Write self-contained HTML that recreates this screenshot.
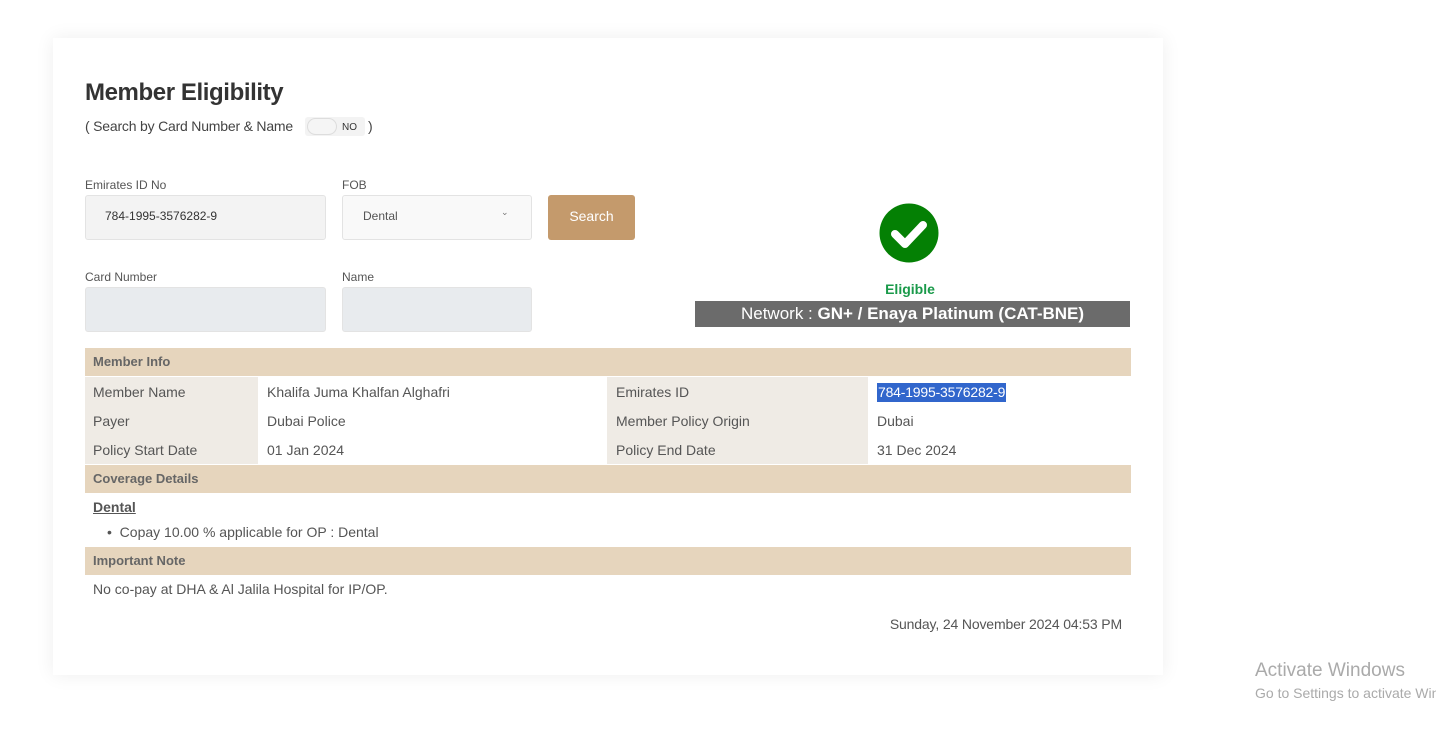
<!DOCTYPE html>
<html><head><meta charset="utf-8"><style>
body{margin:0;width:1436px;height:751px;background:#fff;font-family:"Liberation Sans",sans-serif;position:relative;overflow:hidden;color:#555}
.a{position:absolute;white-space:nowrap}
.card{position:absolute;left:53px;top:38px;width:1110px;height:637px;background:#fff;box-shadow:0 0 18px rgba(0,0,0,.07)}
.lbl{font-size:12px;color:#555}
.inp{position:absolute;border:1px solid #e3e3e3;border-radius:3px;box-sizing:border-box}
.hdr{position:absolute;left:85px;width:1046px;height:28px;background:#e6d5bd;font-size:13px;font-weight:bold;color:#666;line-height:28px;padding-left:8px;box-sizing:border-box}
.c{position:absolute;height:29px;line-height:30px;font-size:14px;color:#555;padding-left:8px;box-sizing:border-box}
.g{background:#efebe5}
</style></head><body>
<div class="card"></div>
<div class="a" style="left:85px;top:79px;font-size:24px;font-weight:bold;color:#333;letter-spacing:-0.4px">Member Eligibility</div>
<div class="a" style="left:85px;top:118px;font-size:14px;color:#444;letter-spacing:-0.2px">( Search by Card Number &amp; Name</div>
<div class="a" style="left:305px;top:117px;width:60px;height:19px;background:#f3f3f3;border-radius:3px"></div>
<div class="a" style="left:307px;top:118px;width:30px;height:17px;border:1px solid #ddd;border-radius:9px;background:#f5f5f5;box-sizing:border-box"></div>
<div class="a" style="left:342px;top:122px;font-size:10px;color:#333">NO</div>
<div class="a" style="left:368px;top:118px;font-size:14px;color:#444">)</div>

<div class="a lbl" style="left:85px;top:178px">Emirates ID No</div>
<div class="inp" style="left:85px;top:195px;width:241px;height:45px;background:#f3f3f3"></div>
<div class="a" style="left:105px;top:209px;font-size:12px;color:#333">784-1995-3576282-9</div>
<div class="a lbl" style="left:342px;top:178px">FOB</div>
<div class="inp" style="left:342px;top:195px;width:190px;height:45px;background:#f9f9f9"></div>
<div class="a" style="left:363px;top:209px;font-size:12px;color:#555">Dental</div>
<div class="a" style="left:501px;top:207px;font-size:9px;color:#777">&#8964;</div>
<div class="a" style="left:548px;top:195px;width:87px;height:45px;background:#c49a6c;border-radius:3px;color:#fff;font-size:14px;text-align:center;line-height:43px">Search</div>
<div class="a lbl" style="left:85px;top:270px">Card Number</div>
<div class="inp" style="left:85px;top:287px;width:241px;height:45px;background:#e8ebee"></div>
<div class="a lbl" style="left:342px;top:270px">Name</div>
<div class="inp" style="left:342px;top:287px;width:190px;height:45px;background:#e8ebee"></div>

<svg class="a" style="left:879px;top:203px" width="60" height="60" viewBox="0 0 60 60"><circle cx="30" cy="30" r="29.5" fill="#048004"/><path d="M16 31 L26 41 L44 22" stroke="#fff" stroke-width="8" fill="none" stroke-linecap="round" stroke-linejoin="round"/></svg>
<div class="a" style="left:695px;width:430px;text-align:center;top:281px;font-size:14px;font-weight:bold;color:#1a9a4a">Eligible</div>
<div class="a" style="left:695px;top:301px;width:435px;height:26px;background:#6b6b6b;color:#fff;font-size:17px;text-align:center;line-height:26px">Network : <b>GN+ / Enaya Platinum (CAT-BNE)</b></div>

<div class="hdr" style="top:348px">Member Info</div>
<div class="c g" style="left:85px;top:377px;width:173px;height:87px"></div>
<div class="c g" style="left:607px;top:377px;width:261px;height:87px"></div>
<div class="c" style="left:85px;top:377px">Member Name</div>
<div class="c" style="left:85px;top:406px">Payer</div>
<div class="c" style="left:85px;top:435px">Policy Start Date</div>
<div class="c" style="left:259px;top:377px">Khalifa Juma Khalfan Alghafri</div>
<div class="c" style="left:259px;top:406px">Dubai Police</div>
<div class="c" style="left:259px;top:435px">01 Jan 2024</div>
<div class="c" style="left:608px;top:377px">Emirates ID</div>
<div class="c" style="left:608px;top:406px">Member Policy Origin</div>
<div class="c" style="left:608px;top:435px">Policy End Date</div>
<div class="a" style="left:877px;top:383px;background:#3166cc;color:#fff;font-size:14px;line-height:19px;padding:0 1px;letter-spacing:-0.2px">784-1995-3576282-9</div>
<div class="c" style="left:869px;top:406px">Dubai</div>
<div class="c" style="left:869px;top:435px">31 Dec 2024</div>

<div class="hdr" style="top:465px">Coverage Details</div>
<div class="a" style="left:93px;top:499px;font-size:14px;font-weight:bold;text-decoration:underline;color:#555">Dental</div>
<div class="a" style="left:107px;top:524px;font-size:14px;color:#555">•&nbsp;&nbsp;Copay 10.00 % applicable for OP : Dental</div>
<div class="hdr" style="top:547px">Important Note</div>
<div class="a" style="left:93px;top:581px;font-size:14px;color:#555">No co-pay at DHA &amp; Al Jalila Hospital for IP/OP.</div>
<div class="a" style="right:314px;top:616px;font-size:14px;color:#555;letter-spacing:-0.15px">Sunday, 24 November 2024 04:53 PM</div>

<div class="a" style="left:1255px;top:660px;font-size:19px;color:#aaa">Activate Windows</div>
<div class="a" style="left:1255px;top:685px;font-size:14px;color:#aaa">Go to Settings to activate Windows.</div>
</body></html>
